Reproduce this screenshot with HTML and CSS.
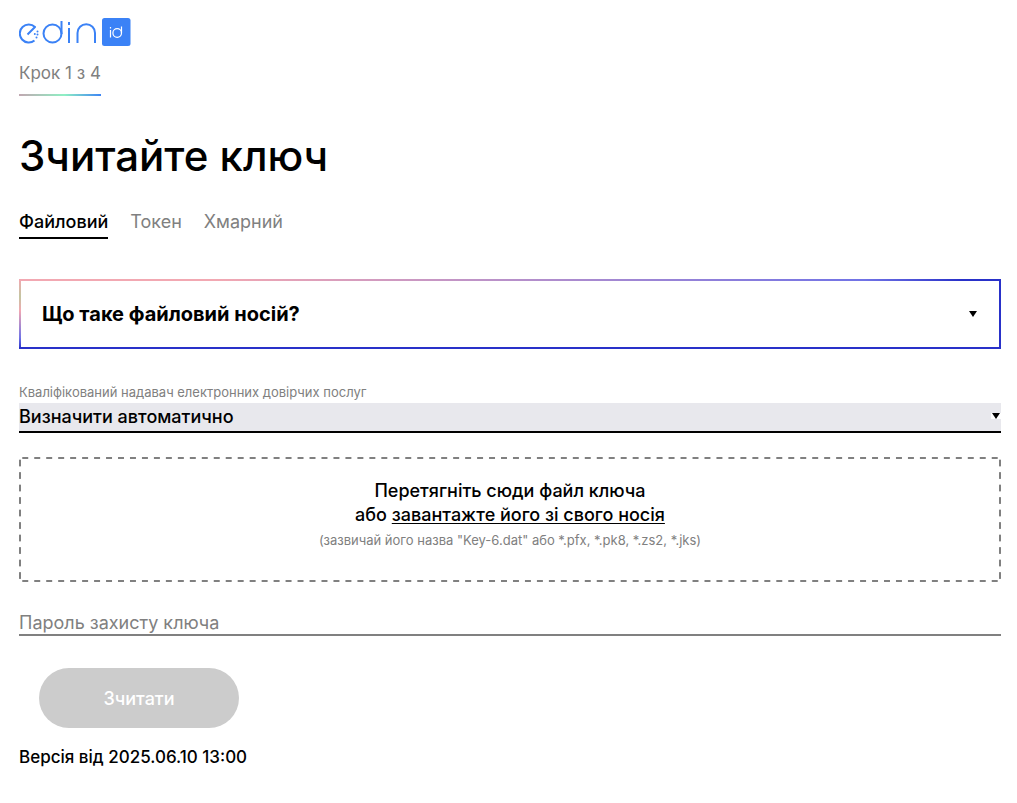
FILE: index.html
```html
<!DOCTYPE html>
<html lang="uk">
<head>
<meta charset="utf-8">
<meta name="viewport" content="width=device-width, initial-scale=1">
<title>Зчитайте ключ</title>
<link rel="stylesheet" href="styles.css">
</head>
<body>
<main class="page">
  <header class="header">
    <svg class="logo" viewBox="0 0 112 28" role="img" aria-label="edin id">
      <g fill="none" stroke="#3b82f6" stroke-width="2">
        <path d="M8.500 16.500 16 9A9 9 0 1 0 15.500 22.500" stroke-linejoin="round"/>
        <circle cx="33.500" cy="15.500" r="9"/>
        <path d="M42.500 3v13M50 10v15M50 4v3M58.500 25V15a8.750 8.750 0 0 1 17.500 0v10"/>
      </g>
      <g fill="#3b82f6">
        <circle cx="18.500" cy="13.500" r="1"/>
        <circle cx="15.800" cy="16" r="1"/><circle cx="18.500" cy="16.500" r="1"/>
        <circle cx="17.500" cy="19.500" r="1"/>
        <rect x="83" width="28.500" height="28" rx="2.500"/>
      </g>
      <g fill="none" stroke="#fff" stroke-width="1.200">
        <path d="M91.500 12v7.500M91.500 9v1.500M102.500 8.500v6.500"/>
        <circle cx="98.200" cy="15" r="4.300"/>
      </g>
    </svg>
    <p class="step">Крок 1 з 4</p>
  </header>

  <h1 class="title">Зчитайте ключ</h1>

  <nav class="tabs">
    <button class="tab tab-active" type="button">Файловий</button>
    <button class="tab" type="button">Токен</button>
    <button class="tab" type="button">Хмарний</button>
  </nav>

  <button class="hint" type="button" aria-expanded="false">
    <span>Що таке файловий носій?</span>
    <svg class="arrow" viewBox="0 0 10 6" aria-hidden="true"><path d="M1 0h8L5 6z"/></svg>
  </button>

  <form class="form">
    <label class="label" for="provider">Кваліфікований надавач електронних довірчих послуг</label>
    <div class="select-wrap">
      <select class="select" id="provider"><option>Визначити автоматично</option></select>
      <svg class="arrow select-arrow" viewBox="0 0 10 6" aria-hidden="true"><path d="M1 0h8L5 6z"/></svg>
    </div>

    <div class="dropzone">
      <p class="drop-text">Перетягніть сюди файл ключа<br>або <a class="link" href="#">завантажте його зі свого носія</a></p>
      <p class="drop-note">(зазвичай його назва "Key-6.dat" або *.pfx, *.pk8, *.zs2, *.jks)</p>
    </div>

    <input class="password" type="password" aria-label="Пароль захисту ключа" placeholder="Пароль захисту ключа">
    <button class="submit" type="submit" disabled>Зчитати</button>
  </form>

  <footer class="version">Версія від 2025.06.10 13:00</footer>
</main>
</body>
</html>
```
FILE: styles.css
```css
* { box-sizing: border-box; }

body {
  margin: 0;
  background: #fff;
  color: #000;
  font: 500 18px/24px Inter, "Noto Sans", sans-serif;
}

p, h1 { margin: 0; }

button, select, input { font: inherit; color: inherit; border-radius: 0; }

.page { padding: 18px 16px 32px 19px; }

.header { display: flex; flex-direction: column; align-items: flex-start; }

.logo { display: block; width: 112px; height: 28px; }

.step {
  margin-top: 15px;
  padding-bottom: 9px;
  border-bottom: 2px solid;
  border-image: linear-gradient(90deg, #c3a6b1, #8ff0c4 55%, #3b82f6) 1;
  color: #808080;
  font-size: 17px;
  font-weight: 400;
}

.title { margin-top: 32px; font-size: 42px; line-height: 56px; font-weight: 500; }

.tabs { display: flex; align-items: flex-start; gap: 22px; margin-top: 26px; }

.tab {
  padding: 0 0 3px;
  border: 0;
  border-bottom: 2px solid transparent;
  background: none;
  color: #808080;
  font-weight: 400;
}

.tab-active { border-color: #000; color: #000; font-weight: 500; }

.hint {
  display: flex;
  align-items: center;
  justify-content: space-between;
  width: 100%;
  height: 70px;
  margin-top: 40px;
  padding: 0 23px;
  border: 0;
  background:
    linear-gradient(#2931c9, #2931c9) bottom / 100% 2px no-repeat,
    linear-gradient(#2931c9, #2931c9) right / 2px 100% no-repeat,
    linear-gradient(90deg, #f2a8b2 20%, #7173e6 86%, #2931c9 96%) top / 100% 2px no-repeat,
    linear-gradient(#f2a8b2, #c3c6a0 25%, #f2a8b2 45%, #7173e6 84%, #2931c9) left / 2px 100% no-repeat;
  font-size: 20px;
  font-weight: 700;
  text-align: left;
}

.arrow { width: 10px; height: 6px; }

.form { display: flex; flex-direction: column; margin-top: 34px; }

.label {
  padding-bottom: 2px;
  color: #808080;
  font-size: 13px;
  line-height: 18px;
  font-weight: 400;
}

.select-wrap { position: relative; }

.select {
  display: block;
  width: 100%;
  height: 30px;
  padding: 0;
  appearance: none;
  border: 0;
  border-bottom: 2px solid #000;
  background: #e8e8ed;
}

.select-arrow {
  position: absolute;
  top: 10px;
  right: 0;
  background: #fff;
  pointer-events: none;
}

.dropzone {
  --dash-x: linear-gradient(90deg, #808080 3px, transparent 3px 9px, #808080 9px);
  --dash-y: linear-gradient(#808080 3px, transparent 3px 9px, #808080 9px);
  margin-top: 24px;
  padding: 22px 16px 30px;
  border-radius: 3px;
  background:
    var(--dash-x) top / 12px 2px round no-repeat,
    var(--dash-x) bottom / 12px 2px round no-repeat,
    var(--dash-y) left / 2px 12px no-repeat round,
    var(--dash-y) right / 2px 12px no-repeat round;
  text-align: center;
}

.link { color: inherit; text-underline-offset: 2px; }

.drop-note { margin-top: 1px; color: #808080; font-size: 13px; font-weight: 400; }

.password {
  width: 100%;
  height: 24px;
  margin-top: 30px;
  padding: 0;
  border: 0;
  border-bottom: 2px solid #808080;
  background: none;
  font-weight: 400;
}

.password::placeholder { color: #808080; opacity: 1; }

.submit {
  width: 200px;
  height: 60px;
  margin: 32px 0 0 20px;
  padding: 2px 0 0;
  border: 0;
  border-radius: 30px;
  background: #ccc;
  color: #fff;
}

.version { margin-top: 17px; font-size: 17px; }
```
